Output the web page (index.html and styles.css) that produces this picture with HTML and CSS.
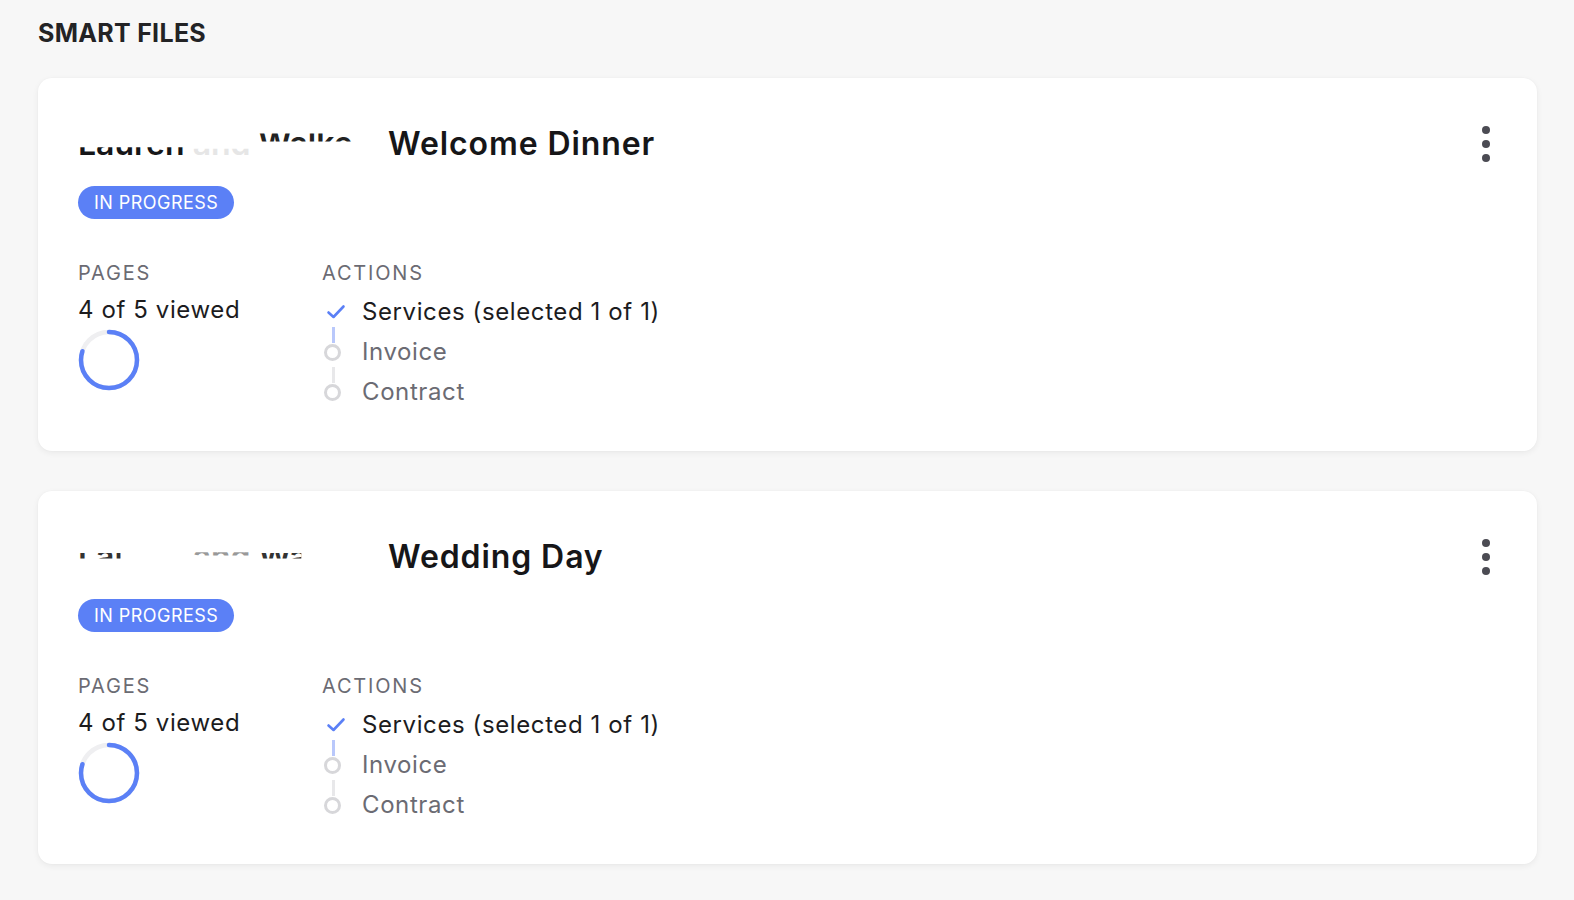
FILE: index.html
```html
<!DOCTYPE html>
<html>
<head>
<meta charset="utf-8">
<link rel="stylesheet" href="styles.css">
</head>
<body>
<h1 class="page-title">SMART FILES</h1>

<div class="card">
  <div class="card-head">
    <h2 class="file-title"><span class="redact"><span class="r-a">Lauren</span><span class="r-b"> and </span><span class="r-c">Walker</span></span>Welcome Dinner</h2>
    <svg class="kebab" width="22" height="40" viewBox="0 0 22 40"><circle cx="11" cy="6" r="4" fill="#4b4b53"/><circle cx="11" cy="20" r="4" fill="#4b4b53"/><circle cx="11" cy="34" r="4" fill="#4b4b53"/></svg>
  </div>
  <span class="badge">IN PROGRESS</span>
  <div class="stats">
    <div class="pages">
      <div class="label">PAGES</div>
      <div class="value">4 of 5 viewed</div>
      <svg class="ring" width="64" height="64" viewBox="0 0 64 64">
        <circle cx="32" cy="32" r="28" fill="none" stroke="#efeff1" stroke-width="4.5"/>
        <circle cx="32" cy="32" r="28" fill="none" stroke="#5b80f6" stroke-width="4.5" stroke-linecap="round" stroke-dasharray="140.7 175.9" transform="rotate(-90 32 32)"/>
      </svg>
    </div>
    <div class="actions">
      <div class="label">ACTIONS</div>
      <ul class="steps">
        <li class="step done">
          <span class="marker"><svg width="24" height="20" viewBox="0 0 24 20"><path d="M4.5 10.5 L9.5 15 L19.5 4.5" fill="none" stroke="#5b80f6" stroke-width="2.6" stroke-linecap="round" stroke-linejoin="round"/></svg></span>
          <span class="step-text">Services (selected 1 of 1)</span>
        </li>
        <li class="step todo after-done">
          <span class="marker"><span class="dot"></span></span>
          <span class="step-text">Invoice</span>
        </li>
        <li class="step todo">
          <span class="marker"><span class="dot"></span></span>
          <span class="step-text">Contract</span>
        </li>
      </ul>
    </div>
  </div>
</div>

<div class="card">
  <div class="card-head">
    <h2 class="file-title"><span class="redact"><span class="r-d">Lauren</span><span class="r-e"> and </span><span class="r-d">Walker</span></span>Wedding Day</h2>
    <svg class="kebab" width="22" height="40" viewBox="0 0 22 40"><circle cx="11" cy="6" r="4" fill="#4b4b53"/><circle cx="11" cy="20" r="4" fill="#4b4b53"/><circle cx="11" cy="34" r="4" fill="#4b4b53"/></svg>
  </div>
  <span class="badge">IN PROGRESS</span>
  <div class="stats">
    <div class="pages">
      <div class="label">PAGES</div>
      <div class="value">4 of 5 viewed</div>
      <svg class="ring" width="64" height="64" viewBox="0 0 64 64">
        <circle cx="32" cy="32" r="28" fill="none" stroke="#efeff1" stroke-width="4.5"/>
        <circle cx="32" cy="32" r="28" fill="none" stroke="#5b80f6" stroke-width="4.5" stroke-linecap="round" stroke-dasharray="140.7 175.9" transform="rotate(-90 32 32)"/>
      </svg>
    </div>
    <div class="actions">
      <div class="label">ACTIONS</div>
      <ul class="steps">
        <li class="step done">
          <span class="marker"><svg width="24" height="20" viewBox="0 0 24 20"><path d="M4.5 10.5 L9.5 15 L19.5 4.5" fill="none" stroke="#5b80f6" stroke-width="2.6" stroke-linecap="round" stroke-linejoin="round"/></svg></span>
          <span class="step-text">Services (selected 1 of 1)</span>
        </li>
        <li class="step todo after-done">
          <span class="marker"><span class="dot"></span></span>
          <span class="step-text">Invoice</span>
        </li>
        <li class="step todo">
          <span class="marker"><span class="dot"></span></span>
          <span class="step-text">Contract</span>
        </li>
      </ul>
    </div>
  </div>
</div>
</body>
</html>
```

FILE: styles.css
```css
* { box-sizing: border-box; }
html, body { margin: 0; padding: 0; }
html { overflow: hidden; }
body {
  background: #f7f7f7;
  font-family: Inter, "Open Sans", sans-serif;
  color: #1c1c1e;
  padding: 18px 37px 0 38px;
}
.page-title {
  margin: 0 0 30px 0;
  font-size: 25px;
  line-height: 30px;
  font-weight: 700;
  color: #232325;
  letter-spacing: 0.3px;
}
.card {
  background: #fff;
  border-radius: 14px;
  box-shadow: 0 2px 6px rgba(0,0,0,0.06), 0 0 2px rgba(0,0,0,0.03);
  padding: 46px 40px 40px 40px;
  margin-bottom: 40px;
  height: 373px;
}
.card-head {
  display: flex;
  justify-content: space-between;
  align-items: center;
  height: 40px;
}
.kebab { display: block; }
.file-title {
  margin: 0;
  font-size: 32px;
  line-height: 40px;
  font-weight: 600;
  color: #161618;
  white-space: nowrap;
  letter-spacing: 0.9px;
}
.redact {
  display: inline-block;
  width: 310px;
  vertical-align: top;
  white-space: nowrap;
  overflow: hidden;
  letter-spacing: 0;
}
.r-a { display: inline-block; clip-path: inset(58% 0 0 0); }
.r-b { display: inline-block; clip-path: inset(62% 0 0 0); color: #e6e6e6; white-space: pre; }
.r-c { display: inline-block; clip-path: inset(24% 12% 56% 0); color: #222; }
.r-d { display: inline-block; clip-path: inset(40% 60% 46% 0); color: #333; }
.r-e { display: inline-block; clip-path: inset(38% 0 54% 0); color: #999; white-space: pre; }
.badge {
  display: inline-block;
  margin-top: 22px;
  height: 33px;
  line-height: 33px;
  padding: 0 16px;
  border-radius: 17px;
  background: #5b80f6;
  color: #fff;
  font-size: 18px;
  font-weight: 400;
  letter-spacing: 0.45px;
}
.stats {
  display: flex;
  margin-top: 42px;
}
.pages { width: 244px; }
.label {
  font-size: 20px;
  line-height: 24px;
  color: #6b6b73;
  letter-spacing: 1.8px;
}
.value {
  margin-top: 9px;
  font-size: 24px;
  line-height: 32px;
  color: #1c1c1e;
  letter-spacing: 0.6px;
}
.ring { display: block; margin-top: 2px; margin-left: -1px; }
.steps {
  list-style: none;
  margin: 7px 0 0 0;
  padding: 0;
}
.step {
  display: flex;
  align-items: center;
  height: 40px;
  position: relative;
}
.marker {
  width: 40px;
  display: flex;
  align-items: center;
  padding-left: 2px;
}
.marker svg { display: block; }
.dot {
  display: block;
  width: 17px;
  height: 17px;
  border: 3px solid #d7d7da;
  border-radius: 50%;
}
.step-text {
  font-size: 24px;
  line-height: 32px;
  letter-spacing: 0.6px;
}
.done .step-text { color: #1c1c1e; }
.todo .step-text { color: #6b6b73; }
.todo::before {
  content: "";
  position: absolute;
  left: 9.5px;
  top: -5px;
  width: 3px;
  height: 16px;
  background: #e8e8ea;
}
.after-done::before { background: #b9c8fb; }
```
